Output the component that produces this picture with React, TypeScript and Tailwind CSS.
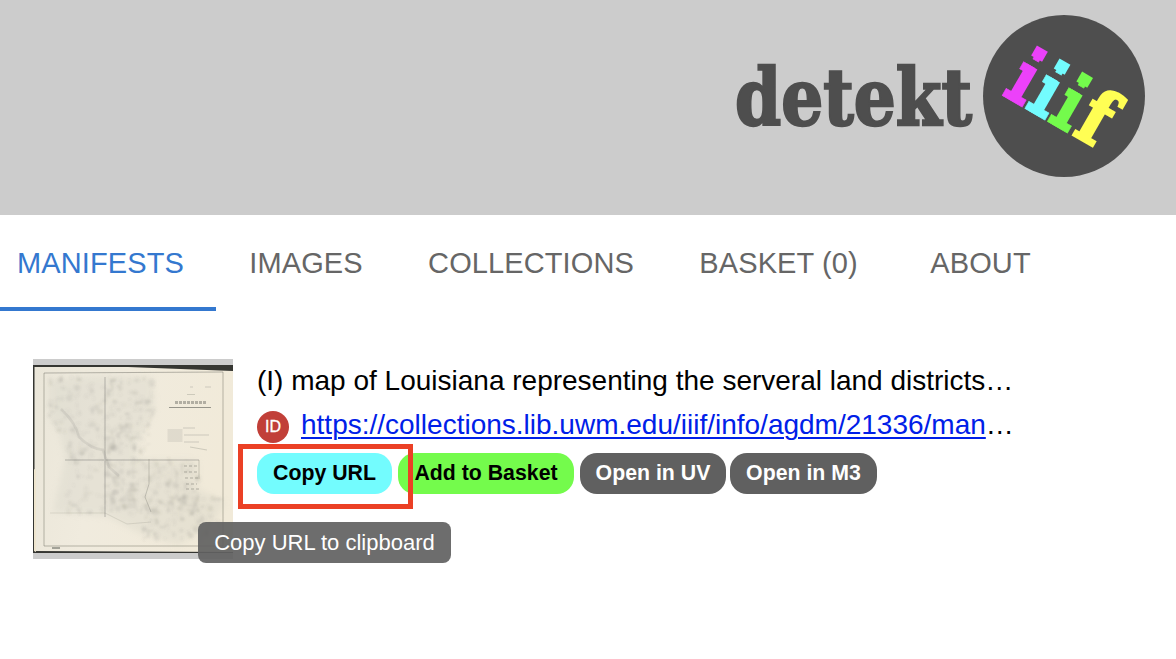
const tabs = [
  { label: "MANIFESTS", box: "w-[216px] pr-[15px] text-[#3478cf] border-[#3478cf]" },
  { label: "IMAGES", box: "w-[180px] text-[#666] border-transparent" },
  { label: "COLLECTIONS", box: "w-[270px] text-[#666] border-transparent" },
  { label: "BASKET (0)", box: "w-[225px] text-[#666] border-transparent" },
  { label: "ABOUT", box: "w-[179px] text-[#666] border-transparent" },
];

const logoLetters = [
  { x: 0, color: "#ec41fa" },
  { x: 26.1, color: "#73fcfe" },
  { x: 52.2, color: "#74fb4c" },
];

function Logo() {
  return (
    <svg
      width="416"
      height="164"
      viewBox="730 14 416 164"
      fontWeight="700"
      role="img"
      aria-label="detekt iiif"
      className="overflow-visible"
    >
      <text
        x="735"
        y="125"
        textLength="237"
        lengthAdjust="spacingAndGlyphs"
        fontFamily="'DejaVu Serif', serif"
        fontSize="79"
        fill="#4e4e4e"
        stroke="#4e4e4e"
        strokeWidth="2.4"
      >
        detekt
      </text>
      <circle cx="1064" cy="96" r="81" fill="#4e4e4e" />
      <g transform="translate(1002.5 95.5) rotate(30)">
        {logoLetters.map((l) => (
          <g key={l.color} transform={`translate(${l.x} 0)`} fill={l.color} stroke={l.color}>
            <text
              transform="scale(0.64 1)"
              x="-5.8"
              y="0"
              fontFamily="'DejaVu Sans Mono', monospace"
              fontSize="73"
              strokeWidth="0.6"
            >
              i
            </text>
            <rect x="4.8" y="-60.5" width="12.6" height="11.5" stroke="none" />
            <rect x="5.2" y="-40" width="12" height="40" stroke="none" />
          </g>
        ))}
        <text
          transform="scale(0.84 1)"
          x="94"
          y="-1.5"
          fontFamily="'DejaVu Serif', serif"
          fontSize="76"
          fill="#fffe54"
          stroke="#fffe54"
          strokeWidth="3"
        >
          f
        </text>
      </g>
    </svg>
  );
}

function rng(seed: number) {
  let s = seed;
  return () => {
    s = (s * 16807) % 2147483647;
    return s / 2147483647;
  };
}

const regions = [
  { x: 16, y: 18, w: 55, h: 55, n: 70 },
  { x: 72, y: 18, w: 48, h: 78, n: 120 },
  { x: 32, y: 66, w: 72, h: 88, n: 130 },
  { x: 74, y: 100, w: 92, h: 56, n: 170 },
  { x: 110, y: 138, w: 78, h: 44, n: 100 },
];
const rand = rng(42);
const marks = regions.flatMap((r) =>
  Array.from({ length: r.n }, () => ({
    x: r.x + rand() * r.w,
    y: r.y + rand() * r.h,
    rx: 0.8 + rand() * 2.8,
    ry: 0.8 + rand() * 2.8,
    o: 0.03 + rand() * 0.08,
  })),
);

function MapThumbnail() {
  return (
    <svg width="200" height="200" viewBox="0 0 200 200" role="img" aria-label="Map of Louisiana" className="shrink-0">
      <defs>
        <linearGradient id="paper" x1="0" y1="0" x2="1" y2="0.2">
          <stop offset="0" stopColor="#eae6d9" />
          <stop offset="0.4" stopColor="#f0ebde" />
          <stop offset="1" stopColor="#f1ead9" />
        </linearGradient>
        <filter id="soft">
          <feGaussianBlur stdDeviation="0.6" />
        </filter>
        <filter id="blotch">
          <feGaussianBlur stdDeviation="1.1" />
        </filter>
        <filter id="wash">
          <feGaussianBlur stdDeviation="3" />
        </filter>
      </defs>
      <rect width="200" height="200" fill="#ccc" />
      <rect y="6" width="200" height="188" fill="#353632" />
      <path d="M1.5 8L95 8L200 12V193L1.5 192Z" fill="url(#paper)" />
      <path d="M1 110L3 111V193L1 192Z" fill="#eee5ce" />
      <path
        d="M16 22Q70 12 120 18L122 52L105 82L103 100L165 101L165 130L192 142L180 168L145 186L110 176L75 158L20 153L32 100L27 76L16 58Z"
        fill="#bfc1b6"
        opacity="0.2"
        filter="url(#wash)"
      />
      <g fill="#6d6e68" filter="url(#blotch)">
        {marks.map((m, i) => (
          <ellipse key={i} cx={m.x} cy={m.y} rx={m.rx} ry={m.ry} opacity={m.o} />
        ))}
      </g>
      <g fill="none" stroke="#65665f" filter="url(#soft)">
        <path d="M11 14L190 13V187H11Z" strokeWidth="1" opacity="0.45" />
        <path d="M72 18V158M32 101H166" strokeWidth="2" opacity="0.2" />
        <path d="M116 100V125L112 138L118 153M166 101V120" opacity="0.3" />
        <path d="M17 154H72L94 165L118 163" opacity="0.16" />
        <path d="M28 50Q43 64 46 78Q58 90 70 91L76 108L86 117" strokeWidth="2.5" opacity="0.12" />
        <path d="M136 48.5H178" strokeWidth="1" opacity="0.65" />
        <path d="M142 43.5H174" strokeWidth="3" strokeDasharray="3 1" opacity="0.45" />
        <path d="M154 35.5H162M157 28H160M172 28H178M150 69H162M151 76H176M151 83H166M157 88L174 91" opacity="0.25" />
        <path d="M142 70V83" strokeWidth="15" opacity="0.12" />
        <path d="M151 107H166M151 113H164M152 119H166M153 125H164M153 130H166" strokeWidth="2" strokeDasharray="3 2" opacity="0.22" />
        <path d="M19 189H27" strokeWidth="2" opacity="0.55" />
      </g>
    </svg>
  );
}

const pill =
  "flex h-[41px] items-center justify-center rounded-[17px] pt-px text-[21.3px] leading-none font-bold whitespace-nowrap";

export default function App() {
  return (
    <div className="h-[659px] w-[1176px] overflow-hidden bg-white font-['Liberation_Sans',Arial,sans-serif] text-black">
      <header className="flex h-[215px] justify-end bg-[#ccc] pt-[14px] pr-[30px]">
        <Logo />
      </header>

      <nav className="flex h-24">
        {tabs.map((t) => (
          <button
            key={t.label}
            className={`flex shrink-0 items-center justify-center border-b-4 pt-[5px] text-[29px] leading-none tracking-[0.1px] whitespace-nowrap ${t.box}`}
          >
            {t.label}
          </button>
        ))}
      </nav>

      <main className="flex gap-6 pt-12 pl-[33px]">
        <MapThumbnail />
        <section className="w-[757px] pt-1">
          <h1 className="h-9 text-[28px] leading-9 whitespace-nowrap">
            (I) map of Louisiana representing the serveral land districts…
          </h1>
          <div className="mt-2 flex h-9 items-center">
            <span className="mt-1 mr-3 flex size-8 shrink-0 items-center justify-center rounded-full bg-[#c13f38] text-[16px] leading-none text-white [-webkit-text-stroke:0.3px_white]">
              ID
            </span>
            <p className="text-[28px] leading-9 whitespace-nowrap">
              <a className="text-[#0020e8] underline decoration-2 underline-offset-[3px]" href="#manifest">
                https://collections.lib.uwm.edu/iiif/info/agdm/21336/man
              </a>
              …
            </p>
          </div>
          <div className="relative mt-2.5 flex">
            <button className={`${pill} w-[135px] bg-[#73fcfe]`}>Copy URL</button>
            <button className={`${pill} ml-1.5 w-44 bg-[#74fb4c]`}>Add to Basket</button>
            <button className={`${pill} ml-1.5 w-[146px] bg-[#606060] text-white`}>Open in UV</button>
            <button className={`${pill} ml-1 w-[147px] bg-[#606060] text-white`}>Open in M3</button>
            <div className="pointer-events-none absolute -top-[9px] -left-[19px] h-[65px] w-[175px] border-[5px] border-[#eb4025]" />
            <div
              role="tooltip"
              className="absolute top-[69px] -left-[59px] flex h-[41px] w-[253px] items-center justify-center rounded-lg bg-[#616161]/92 text-[22px] leading-none whitespace-nowrap text-white"
            >
              Copy URL to clipboard
            </div>
          </div>
        </section>
      </main>
    </div>
  );
}
